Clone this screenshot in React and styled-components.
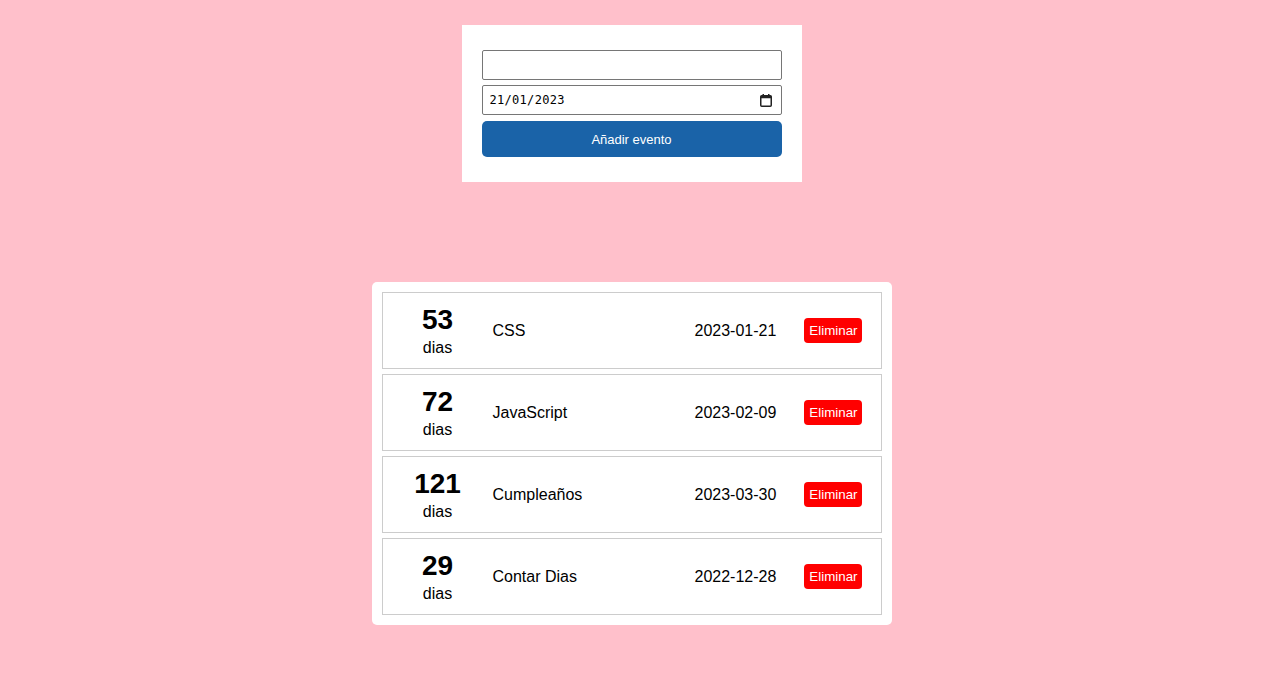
import React, { useState } from "react";
import styled, { createGlobalStyle } from "styled-components";

const GlobalStyle = createGlobalStyle`
  html, body {
    margin: 0;
    padding: 0;
    background: pink;
    font-family: "Liberation Sans", Arial, sans-serif;
  }
`;

const Page = styled.div`
  display: flex;
  flex-direction: column;
  align-items: center;
  padding-top: 25px;
  gap: 100px;
`;

const FormCard = styled.form`
  width: 300px;
  background: white;
  padding: 25px 20px;
  display: flex;
  flex-direction: column;
  gap: 5px;
`;

const Field = styled.input`
  box-sizing: border-box;
  width: 300px;
  height: 30px;
  margin: 0;
  border: 1px solid #767676;
  border-radius: 2px;
  padding: 0 6px;
  font-size: 13px;
  color: black;
  background: white;
`;

const DateBox = styled.label`
  box-sizing: border-box;
  width: 300px;
  height: 30px;
  display: flex;
  align-items: center;
  border: 1px solid #767676;
  border-radius: 2px;
  padding: 0 9px 0 7px;
  background: white;
`;

const DateValue = styled.input`
  flex: 1;
  min-width: 0;
  border: none;
  outline: none;
  padding: 0;
  margin: 0;
  font-family: "DejaVu Sans Mono", monospace;
  font-size: 12px;
  letter-spacing: 0.3px;
  color: black;
  background: transparent;
`;

const AddButton = styled.button`
  margin-top: 1px;
  height: 36px;
  border: none;
  border-radius: 5px;
  background: #1a63a8;
  color: white;
  font-family: "Liberation Sans", Arial, sans-serif;
  font-size: 13px;
  cursor: pointer;
`;

const ListCard = styled.div`
  width: 500px;
  background: white;
  border-radius: 5px;
  padding: 10px;
  display: flex;
  flex-direction: column;
  gap: 5px;
`;

const Row = styled.div`
  display: flex;
  align-items: center;
  height: 75px;
  border: 1px solid #ccc;
  padding: 0 19px 0 10px;
`;

const Count = styled.div`
  width: 90px;
  display: flex;
  flex-direction: column;
  align-items: center;
  margin-top: -1px;
`;

const Days = styled.span`
  font-size: 28px;
  font-weight: bold;
  color: black;
`;

const DaysLabel = styled.span`
  font-size: 16px;
  color: black;
  margin-top: 3px;
`;

const Name = styled.div`
  flex: 1;
  margin-left: 10px;
  font-size: 16px;
  color: black;
`;

const DateText = styled.div`
  font-size: 16px;
  color: black;
`;

const DeleteButton = styled.button`
  margin-left: 28px;
  padding: 5px 4px 5px 5px;
  border: none;
  border-radius: 4px;
  background: red;
  color: white;
  font-family: "Liberation Sans", Arial, sans-serif;
  font-size: 13.33px;
  cursor: pointer;
`;

const CalendarIcon = () => (
  <svg width="12" height="13" viewBox="0 0 12 13">
    <rect x="0.75" y="1.75" width="10.5" height="10.5" rx="1" fill="none" stroke="#222" strokeWidth="1.5" />
    <rect x="0.75" y="1.75" width="10.5" height="2.5" fill="#222" />
    <rect x="2.5" y="0" width="1.5" height="2" fill="#222" />
    <rect x="8" y="0" width="1.5" height="2" fill="#222" />
  </svg>
);

const initialEvents = [
  { id: 1, days: 53, name: "CSS", date: "2023-01-21" },
  { id: 2, days: 72, name: "JavaScript", date: "2023-02-09" },
  { id: 3, days: 121, name: "Cumpleaños", date: "2023-03-30" },
  { id: 4, days: 29, name: "Contar Dias", date: "2022-12-28" }
];

const App = () => {
  const [title, setTitle] = useState("");
  const [date, setDate] = useState("21/01/2023");
  const [events, setEvents] = useState(initialEvents);

  const onSubmit = e => {
    e.preventDefault();
  };

  const remove = id => setEvents(events.filter(ev => ev.id !== id));

  return (
    <>
      <GlobalStyle />
      <Page>
        <FormCard onSubmit={onSubmit}>
          <Field value={title} onChange={e => setTitle(e.target.value)} />
          <DateBox>
            <DateValue value={date} onChange={e => setDate(e.target.value)} />
            <CalendarIcon />
          </DateBox>
          <AddButton type="submit">Añadir evento</AddButton>
        </FormCard>
        <ListCard>
          {events.map(ev => (
            <Row key={ev.id}>
              <Count>
                <Days>{ev.days}</Days>
                <DaysLabel>dias</DaysLabel>
              </Count>
              <Name>{ev.name}</Name>
              <DateText>{ev.date}</DateText>
              <DeleteButton onClick={() => remove(ev.id)}>Eliminar</DeleteButton>
            </Row>
          ))}
        </ListCard>
      </Page>
    </>
  );
};

export default App;
